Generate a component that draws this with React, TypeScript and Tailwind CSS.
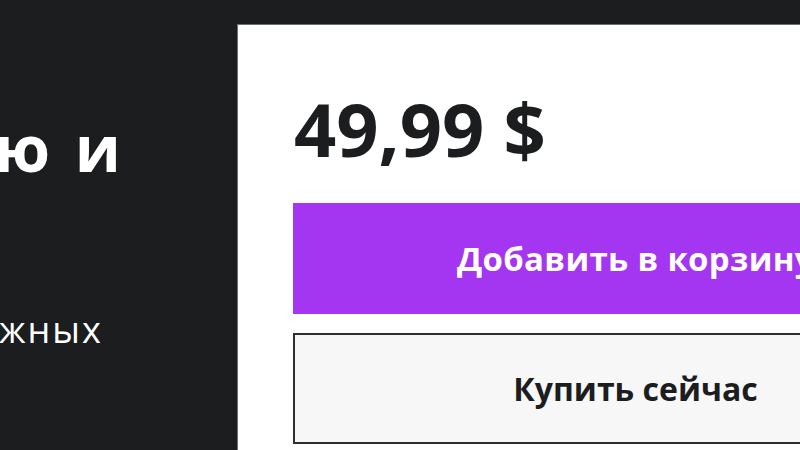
export default function App() {
  return (
    <div
      className="w-[800px] h-[450px] overflow-hidden bg-[#1c1d1f] flex"
      style={{ fontFamily: '"Open Sans", "Noto Sans", sans-serif' }}
    >
      <div className="w-[237px] shrink-0 overflow-hidden flex flex-col">
        <div className="mt-[108px] ml-[-6px] whitespace-nowrap text-white font-bold text-[64px] leading-[80px] [word-spacing:8px]">
          ю и
        </div>
        <div className="mt-[122px] ml-[-1px] whitespace-nowrap text-white font-medium text-[36px] leading-[40px] tracking-[2px]">
          жных
        </div>
      </div>

      <div className="mt-[24px] w-[800px] shrink-0 bg-white border-l border-t border-[#6a6f73] pl-[56px] pt-[54px]">
        <div className="text-[#1c1d1f] font-bold text-[74px] leading-[100px]">
          49,99 $
        </div>
        <div className="mt-[24px] ml-[-1px] w-[685px] flex flex-col gap-[19px]">
          <button className="h-[111px] bg-[#a435f0] text-white font-bold text-[33px] tracking-[0.3px]">
            Добавить в корзину
          </button>
          <button className="h-[111px] bg-[#f7f7f7] border-2 border-[#2d2f31] text-[#1c1d1f] font-bold text-[32px]">
            Купить сейчас
          </button>
        </div>
      </div>
    </div>
  );
}
